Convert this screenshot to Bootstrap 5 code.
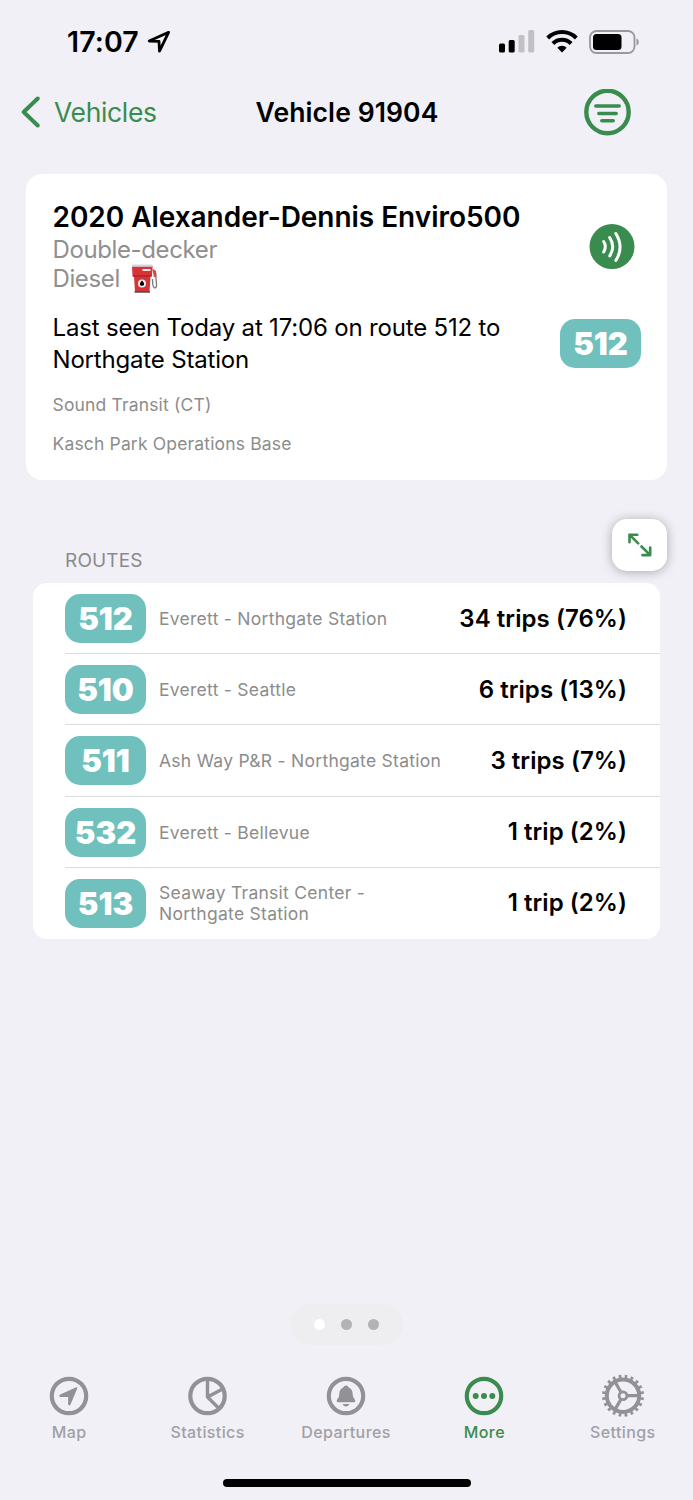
<!DOCTYPE html>
<html lang="en">
<head>
<meta charset="utf-8">
<meta name="viewport" content="width=device-width, initial-scale=1">
<title>Vehicle 91904</title>
<link href="https://cdn.jsdelivr.net/npm/bootstrap@5.3.0/dist/css/bootstrap.min.css" rel="stylesheet">
<style>
  :root { --green: #3a8c4e; --teal: #70c1be; --muted: #8a8a8e; --tab: #919196; }
  body { background: #f1f0f6; font-family: Inter, "Liberation Sans", sans-serif; color: #000; height: 1500px; overflow: hidden; }
  svg { display: block; flex: none; }
  .text-green { color: var(--green); }
  .text-soft { color: var(--muted); }
  .status-row { height: 82px; padding: 1px 53px 0 67px; }
  .clock { font-size: 28.5px; font-weight: 600; letter-spacing: .1px; line-height: 36px; }
  .title-row { height: 60px; padding: 0 62px 0 21px; }
  .nav-label { font-size: 26.5px; line-height: 36px; }
  .back-label { letter-spacing: -.35px; margin-left: 13px; }
  .page-title { letter-spacing: .1px; }
  .summary { margin: 32px 26px 0; height: 306px; border: 0; border-radius: 16px; padding: 26px 26px 0 26.5px; }
  .model { font-size: 28px; font-weight: 600; line-height: 35px; letter-spacing: -.04px; }
  .detail { font-size: 24px; line-height: 29px; letter-spacing: -.38px; color: #8f8f8f; }
  .seen { font-size: 24px; line-height: 32px; margin-top: 18px; letter-spacing: -.18px; }
  .agency { font-size: 17.5px; line-height: 24px; letter-spacing: .16px; color: #8c8c8c; }
  .route-pill { width: 81px; height: 49px; border-radius: 15px; background: var(--teal); color: #fff; font-size: 31px; font-weight: 900; line-height: 49px; text-align: center; flex: none; }
  .routes-head { height: 103px; padding: 39px 26px 0 65px; }
  .expand { width: 55px; height: 52px; border-radius: 15px; background: #fff; box-shadow: 0 1px 11px rgba(0,0,0,.3); }
  .caption-text { font-size: 19px; line-height: 24px; margin-top: 29.5px; letter-spacing: .15px; }
  .routes { margin: 0 33px; border-radius: 14px; overflow: hidden; background: #fff; padding-left: 32px; }
  .route-item { height: 71.2px; padding-right: 33px; }
  .route-item:not(:last-child) { box-shadow: inset 0 -1px #dcdcde; }
  .route-name { font-size: 17.5px; line-height: 21px; letter-spacing: .27px; color: #8c8c8c; margin-left: 13px; }
  .trips { font-size: 24px; font-weight: 600; white-space: nowrap; letter-spacing: .06px; }
  .pager { width: 113px; height: 41px; border-radius: 21px; background: #eeeef0; gap: 16px; }
  .dot { width: 11px; height: 11px; border-radius: 50%; background: #b3b3b5; }
  .tab { width: 138.4px; color: var(--tab); font-size: 16px; font-weight: 500; line-height: 20px; letter-spacing: .4px; gap: 3px; }
  .tab .label { color: #a0a0a5; }
  .tab.current, .tab.current .label { color: var(--green); }
  .home-bar { width: 248px; height: 8px; border-radius: 4px; background: #000; }
</style>
</head>
<body class="d-flex flex-column">
<header>
  <div class="status-row d-flex align-items-center justify-content-between">
    <div class="d-flex align-items-center">
      <span class="clock">17:07</span>
      <svg class="ms-2" width="24" height="24" viewBox="0 0 24 24" fill="none" stroke="#000" stroke-width="2.8" stroke-linejoin="round"><path d="M21.6 2.3 2.2 11l9.800.4.5 9.800z"/></svg>
    </div>
    <div class="d-flex align-items-center">
      <svg width="36" height="23" viewBox="0 0 36 23"><rect y="13.500" width="6" height="9" rx="1.500"/><rect x="9.700" y="10" width="6" height="12.500" rx="1.500"/><g fill="#c1c0c5"><rect x="19.500" y="5" width="6" height="17.500" rx="1.500"/><rect x="29.200" width="6" height="22.500" rx="1.500"/></g></svg>
      <svg style="margin-left:11px" width="32" height="23" viewBox="0 0 32 23"><g fill="none" stroke="#000" stroke-width="4"><path d="M1.700 8a20.200 20.200 0 0 1 28.600 0"/><path d="M6.900 13.500a13 13 0 0 1 18.200 0"/></g><path d="M16 22.500l-4.700-4.700a6.700 6.700 0 0 1 9.400 0z"/></svg>
      <svg style="margin-left:11px" width="51" height="24" viewBox="0 0 51 24"><rect x="1" y="1" width="44.500" height="22" rx="6.500" fill="none" stroke="#98979c" stroke-width="1.800"/><rect x="4" y="4" width="28.500" height="16" rx="3.500"/><path d="M47.500 8.500c3 1 3 6 0 7z" fill="#98979c"/></svg>
    </div>
  </div>
  <div class="title-row d-flex align-items-center justify-content-between">
    <a class="d-flex align-items-center text-decoration-none text-green nav-label" href="#" style="width:180px">
      <svg width="20" height="32" viewBox="0 0 20 32" fill="none" stroke="currentColor" stroke-width="4" stroke-linecap="round" stroke-linejoin="round"><path d="M16.700 2.500 2.700 16l14 13.500"/></svg>
      <span class="back-label">Vehicles</span>
    </a>
    <h1 class="nav-label page-title fw-semibold m-0 text-nowrap">Vehicle 91904</h1>
    <div class="d-flex justify-content-end" style="width:138px">
      <svg class="text-green" width="47" height="47" viewBox="0 0 47 47" fill="none" stroke="currentColor" stroke-linecap="round"><circle cx="23.500" cy="23" r="21.200" stroke-width="4.400"/><path stroke-width="3.500" d="M11.800 17h23.400M14.800 24.500h17.400M17.800 31.800h11.400"/></svg>
    </div>
  </div>
</header>
<main>
  <section class="card summary d-flex flex-row justify-content-between">
    <div>
      <h2 class="model m-0 text-nowrap">2020 Alexander-Dennis Enviro500</h2>
      <div class="detail">Double-decker</div>
      <div class="detail d-flex">Diesel
        <svg style="margin-left:11px" width="28" height="30" viewBox="0 0 28 30"><path d="M22 6c4 1 2.500 5 3 9s1.300 9-1.200 9-2-5-2.300-9" fill="none" stroke="#77787c" stroke-width="1.300"/><path d="M21.500 5l3.500 2 .3 6h-2.500z" fill="#d44a4b"/><path d="M1 2h20.700l-.8 10.500H19.500L18.500 28H4L3 12.500H1.500z" fill="#d73438"/><path d="M1 .5h20.700v2.300H1z" fill="#d5d6da"/><path d="M2 12h18.500" stroke="#992329" stroke-width="1.200"/><path d="M11.500 5h8v2h-8z" fill="#eee6e6"/><path d="M3.500 27.300h15.500v1.400h-15.500z" fill="#4c4548"/><circle cx="11" cy="19.500" r="4" fill="#f1eeee"/><path d="M11 16.500c3.500 3.500 2 5.300 0 5.300s-3.500-1.800 0-5.300z"/></svg>
      </div>
      <p class="seen mb-0 text-nowrap">Last seen Today at 17:06 on route 512 to<br>Northgate Station</p>
      <div class="agency" style="margin-top:17px">Sound Transit (CT)</div>
      <div class="agency" style="margin-top:14.500px">Kasch Park Operations Base</div>
    </div>
    <div class="d-flex flex-column align-items-end">
      <svg style="margin:24px 6.500px 49px 0" width="46" height="46" viewBox="0 0 46 46"><circle cx="23" cy="22.600" r="22.500" fill="#3a8c4e"/><path d="M14.700 17.500q3.200 5 0 10.500M20.700 13.500q6 9.300 0 18.500M26.800 9.500q8.500 13.500 0 27" fill="none" stroke="#fff" stroke-width="3" stroke-linecap="round"/></svg>
      <div class="route-pill">512</div>
    </div>
  </section>
  <section>
    <div class="routes-head d-flex justify-content-between align-items-start">
      <div class="caption-text text-soft">ROUTES</div>
      <button class="expand btn p-0 border-0 d-flex align-items-center justify-content-center text-green" aria-label="Expand">
        <svg width="24" height="24" viewBox="0 0 24 24" fill="none" stroke="currentColor" stroke-width="2.600" stroke-linecap="round" stroke-linejoin="round"><path d="M9.300 1.700H1.500V9.300M1.500 1.700l8.700 8.600M13.500 13.500l8.700 8.600M22.200 14.500v7.600H14.400"/></svg>
      </button>
    </div>
    <div class="routes">
      <div class="route-item d-flex align-items-center"><div class="route-pill">512</div><div class="route-name">Everett - Northgate Station</div><div class="trips ms-auto">34 trips (76%)</div></div>
      <div class="route-item d-flex align-items-center"><div class="route-pill">510</div><div class="route-name">Everett - Seattle</div><div class="trips ms-auto">6 trips (13%)</div></div>
      <div class="route-item d-flex align-items-center"><div class="route-pill">511</div><div class="route-name">Ash Way P&amp;R - Northgate Station</div><div class="trips ms-auto">3 trips (7%)</div></div>
      <div class="route-item d-flex align-items-center"><div class="route-pill">532</div><div class="route-name">Everett - Bellevue</div><div class="trips ms-auto">1 trip (2%)</div></div>
      <div class="route-item d-flex align-items-center"><div class="route-pill">513</div><div class="route-name">Seaway Transit Center -<br>Northgate Station</div><div class="trips ms-auto">1 trip (2%)</div></div>
    </div>
  </section>
</main>
<footer class="mt-auto d-flex flex-column align-items-center" style="height:196px">
  <div class="pager d-flex align-items-center justify-content-center"><span class="dot bg-white"></span><span class="dot"></span><span class="dot"></span></div>
  <nav class="d-flex w-100" style="margin-top:28px">
    <div class="tab d-flex flex-column align-items-center">
      <svg width="46" height="46" viewBox="0 0 46 46"><circle cx="23" cy="23" r="17.200" fill="none" stroke="currentColor" stroke-width="4.200"/><path d="M31 14.800 24 31.500q-1 1.800-1.300-.5V23.500h-8.500q-1.500-.6 0-1.500l15.500-7q1.500-.7 1.300-.2z" fill="currentColor" stroke="currentColor" stroke-linejoin="round"/></svg>
      <span class="label">Map</span>
    </div>
    <div class="tab d-flex flex-column align-items-center">
      <svg width="46" height="46" viewBox="0 0 46 46" fill="none" stroke="currentColor"><circle cx="22.500" cy="23" r="17.200" stroke-width="4.200"/><path stroke-width="3.400" stroke-linejoin="round" d="M22.500 6v18l11.500 11.500M22.500 24l15-8"/></svg>
      <span class="label">Statistics</span>
    </div>
    <div class="tab d-flex flex-column align-items-center">
      <svg width="46" height="46" viewBox="0 0 46 46"><circle cx="23" cy="23" r="17.200" fill="none" stroke="currentColor" stroke-width="4.200"/><path fill="currentColor" d="M23 12.500c1.500 0 2.300 1 2.500 1.800 3.500 1.500 4.200 4.500 4.300 8 .2 3 2.500 4 2.500 5.700 0 .8-.5 1.200-1.300 1.200H15c-.8 0-1.300-.4-1.300-1.200 0-1.700 2.300-2.700 2.500-5.700.1-3.500.8-6.500 4.300-8 .2-.8 1-1.800 2.500-1.800zM19.700 31h6.600c-.8 3.200-5.800 3.200-6.600 0z"/></svg>
      <span class="label">Departures</span>
    </div>
    <div class="tab current d-flex flex-column align-items-center">
      <svg width="46" height="46" viewBox="0 0 46 46"><circle cx="23" cy="23" r="17.200" fill="none" stroke="currentColor" stroke-width="4.200"/><g fill="currentColor"><circle cx="14.700" cy="23" r="3"/><circle cx="23" cy="23" r="3"/><circle cx="31.300" cy="23" r="3"/></g></svg>
      <span class="label">More</span>
    </div>
    <div class="tab d-flex flex-column align-items-center">
      <svg width="46" height="46" viewBox="0 0 46 46" fill="none" stroke="currentColor"><circle cx="23" cy="22.700" r="16.200" stroke-width="4"/><circle cx="23" cy="22.700" r="19.300" stroke-width="3.400" pathLength="40" stroke-dasharray=".9 1.100" transform="rotate(5 23 22.700)"/><circle cx="23" cy="22.700" r="3.900" stroke-width="2.800"/><path stroke-width="3.200" d="M28 22.700h11M20.600 18.500l-5.500-9.500M20.600 26.900l-5.500 9.500"/></svg>
      <span class="label">Settings</span>
    </div>
  </nav>
  <div class="home-bar" style="margin-top:auto;margin-bottom:13px"></div>
</footer>
<script src="https://cdn.jsdelivr.net/npm/bootstrap@5.3.0/dist/js/bootstrap.bundle.min.js"></script>
</body>
</html>
